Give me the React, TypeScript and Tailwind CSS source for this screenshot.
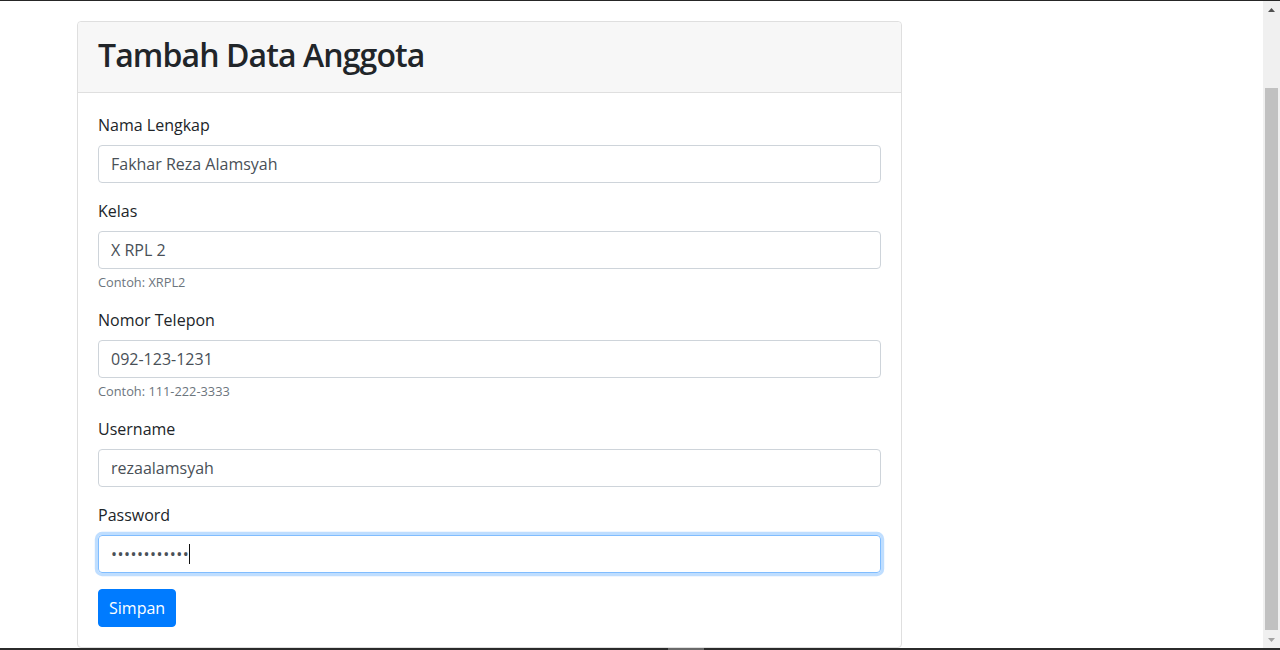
import React from 'react';

const fields = [
  { label: 'Nama Lengkap', value: 'Fakhar Reza Alamsyah' },
  { label: 'Kelas', value: 'X RPL 2', hint: 'Contoh: XRPL2' },
  { label: 'Nomor Telepon', value: '092-123-1231', hint: 'Contoh: 111-222-3333' },
  { label: 'Username', value: 'rezaalamsyah' },
];

const ScrollBar: React.FC = () => (
  <div className="flex w-[17px] flex-col bg-[#f0f0f0]">
    <div className="flex h-[17px] items-center justify-center">
      <svg width="7" height="4" viewBox="0 0 7 4"><path d="M3.5 0L7 4H0z" fill="#505050" /></svg>
    </div>
    <div className="flex-1 px-[2px] pt-[70px] pb-[1px]">
      <div className="h-full bg-[#c1c1c1]" />
    </div>
    <div className="flex h-[17px] items-center justify-center">
      <svg width="7" height="4" viewBox="0 0 7 4"><path d="M0 0H7L3.5 4z" fill="#a3a3a3" /></svg>
    </div>
  </div>
);

export default function App() {
  return (
    <div className="flex h-[650px] flex-col overflow-hidden bg-white font-['Open_Sans','Noto_Sans',sans-serif] text-[#212529]">
      <div className="h-px bg-[#262626]" />
      <div className="flex min-h-0 flex-1">
        <main className="flex-1 pl-[77px] pt-5">
          <div className="w-[825px] rounded border border-[#dfdfdf]">
            <div className="rounded-t border-b border-[#dfdfdf] bg-[#f7f7f7] px-5 py-3">
              <h2 className="mb-[6px] pt-[2px] text-[32px] leading-[1.2] font-semibold tracking-[-0.9px]">Tambah Data Anggota</h2>
            </div>
            <form className="p-5" onSubmit={event => event.preventDefault()}>
              {fields.map(field => (
                <div key={field.label} className="mb-4">
                  <label className="mb-2 block text-base leading-6">{field.label}</label>
                  <input
                    readOnly
                    value={field.value}
                    className="block h-[38px] w-full rounded border border-[#ced4da] px-3 py-1.5 text-base leading-6 text-[#495057] outline-none"
                  />
                  {field.hint && (
                    <small className="mt-1 block text-[12.8px] leading-[19px] text-[#6c757d]">{field.hint}</small>
                  )}
                </div>
              ))}
              <div className="mb-4">
                <label className="mb-2 block text-base leading-6">Password</label>
                <div className="flex h-[38px] w-full items-center rounded border border-[#80bdff] px-3 text-base leading-6 text-[#495057] shadow-[0_0_0_3.2px_rgba(0,123,255,0.25)]">
                  <span className="tracking-[0.5px]">••••••••••••</span>
                  <span className="h-[20px] w-px bg-[#111]" />
                </div>
              </div>
              <button
                type="submit"
                className="h-[38px] rounded border border-[#007bff] bg-[#007bff] px-[10px] text-base leading-6 text-white"
              >
                Simpan
              </button>
            </form>
          </div>
        </main>
        <ScrollBar />
      </div>
      <div className="flex h-[2px] bg-[#2b2b2b]">
        <div className="w-[668px]" />
        <div className="w-[36px] bg-[#6a6a6a]" />
      </div>
    </div>
  );
}
